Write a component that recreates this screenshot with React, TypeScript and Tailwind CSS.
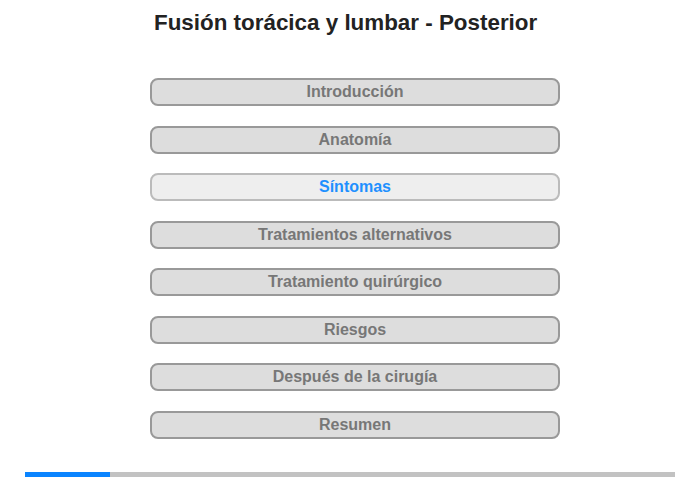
import React from "react";

const items = [
  "Introducción",
  "Anatomía",
  "Síntomas",
  "Tratamientos alternativos",
  "Tratamiento quirúrgico",
  "Riesgos",
  "Después de la cirugía",
  "Resumen",
];

export default function App() {
  return (
    <div className="w-[700px] h-[480px] bg-white font-['Liberation_Sans',Arial,sans-serif] overflow-hidden">
      <h1 className="pt-[10px] pl-[154px] text-[22.4px] leading-[26px] font-bold text-[#222]">
        Fusión torácica y lumbar - Posterior
      </h1>
      <div className="mt-[42px] ml-[150px] w-[410px] flex flex-col gap-[19.5px]">
        {items.map((t, i) =>
          i === 2 ? (
            <div
              key={t}
              className="h-[28px] rounded-[8px] border-2 border-[#bbbbbb] bg-[#eeeeee] flex items-center justify-center text-[16px] font-bold text-[#1e90ff]"
            >
              {t}
            </div>
          ) : (
            <div
              key={t}
              className="h-[28px] rounded-[8px] border-2 border-[#999999] bg-[#dddddd] flex items-center justify-center text-[16px] font-bold text-[#777777]"
            >
              {t}
            </div>
          )
        )}
      </div>
      <div className="mt-[33px] ml-[25px] w-[650px] h-[5px] bg-[#c2c2c2] flex">
        <div className="w-[85px] h-full bg-[#0a84ff]" />
      </div>
    </div>
  );
}
